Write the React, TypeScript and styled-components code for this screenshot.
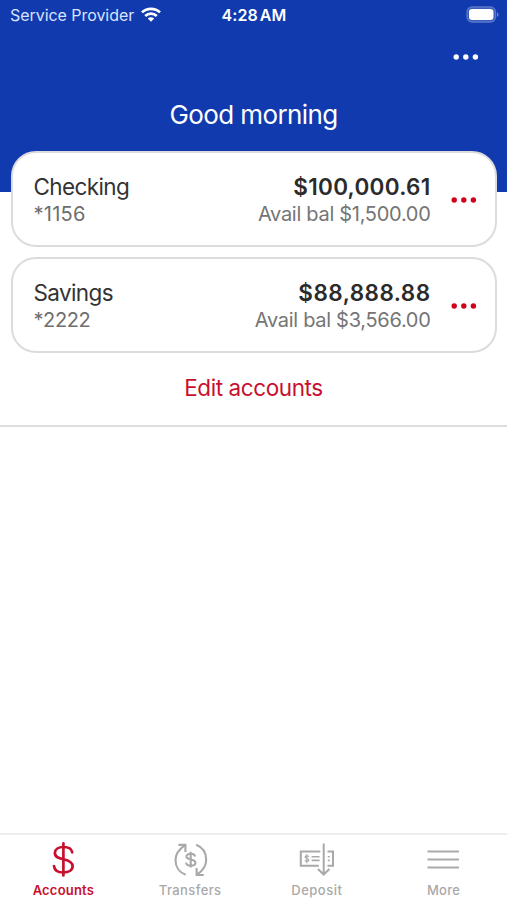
import React from "react";
import styled, { createGlobalStyle } from "styled-components";

const BLUE = "#103aad";
const RED = "#c8102e";
const GREY = "#a9a9a9";

const GlobalStyle = createGlobalStyle`
  * { box-sizing: border-box; }
  body { margin: 0; background: #fff; }
  button { border: 0; padding: 0; background: none; font: inherit; color: inherit; }
  svg { display: block; }
`;

const Screen = styled.div`
  display: flex;
  flex-direction: column;
  width: 507px;
  height: 900px;
  background: #fff;
  overflow: hidden;
  font-family: Inter, "Liberation Sans", sans-serif;
`;

const Header = styled.header`
  flex: none;
  height: 192px;
  background: ${BLUE};
  color: #fff;
`;

const StatusBar = styled.div`
  display: grid;
  grid-template-columns: 1fr auto 1fr;
  align-items: center;
  height: 30px;
  padding: 0 9px 0 10px;
`;

const Carrier = styled.div`
  display: flex;
  align-items: center;
  gap: 7px;
  color: #d9e3ff;
`;

const Battery = styled.div`
  display: flex;
  justify-content: flex-end;
  margin-right: -1px;
  padding-bottom: 1px;
`;

const MenuRow = styled.div`
  display: flex;
  justify-content: flex-end;
  align-items: center;
  height: 54px;
  padding-right: 28px;
`;

const Label = styled.span<{
  $size: number;
  $weight?: number;
  $color?: string;
  $track?: number;
  $word?: number;
  $line?: number;
}>`
  display: block;
  font-size: ${(p) => p.$size}px;
  font-weight: ${(p) => p.$weight ?? 400};
  color: ${(p) => p.$color ?? "inherit"};
  letter-spacing: ${(p) => p.$track ?? 0}px;
  word-spacing: ${(p) => p.$word ?? 0}px;
  line-height: ${(p) => p.$line ?? 27}px;
  white-space: nowrap;
`;

const Greeting = styled.h1`
  margin: 0;
  padding-top: 14px;
  font-size: 26px;
  font-weight: 400;
  line-height: 34px;
  letter-spacing: -0.6px;
  text-align: center;
`;

const AccountList = styled.main`
  flex: none;
  display: flex;
  flex-direction: column;
  gap: 10px;
  height: 276px;
  margin-top: -41px;
  padding: 0 10.5px;
  border-bottom: 2px solid #dedede;
`;

const AccountCard = styled.section`
  flex: none;
  display: grid;
  grid-template-columns: 1fr auto 26px;
  column-gap: 20px;
  align-items: center;
  height: 96px;
  padding: 0 18px 0 21px;
  background: #fff;
  border: 2px solid #dcdcdc;
  border-radius: 25px;
`;

const Lines = styled.div<{ $end?: boolean }>`
  display: flex;
  flex-direction: column;
  align-items: ${(p) => (p.$end ? "flex-end" : "flex-start")};
  padding-top: 4px;
`;

const CardMenu = styled.button`
  padding-top: 2px;
`;

const EditButton = styled.button`
  align-self: center;
  height: 49px;
`;

const TabBar = styled.nav`
  flex: none;
  display: grid;
  grid-template-columns: repeat(4, 1fr);
  height: 67px;
  margin-top: auto;
  border-top: 2px solid #ededed;
`;

const Tab = styled.button<{ $active?: boolean }>`
  display: flex;
  flex-direction: column;
  align-items: center;
  gap: 2px;
  padding-top: 7px;
  color: ${(p) => (p.$active ? RED : GREY)};
`;

const Dots = ({ color }: { color: string }) => (
  <svg width="26" height="6" viewBox="0 0 26 6" fill={color}>
    <circle cx="3.2" cy="3" r="2.7" />
    <circle cx="12.8" cy="3" r="2.7" />
    <circle cx="22.4" cy="3" r="2.7" />
  </svg>
);

const WifiIcon = () => (
  <svg width="20" height="16" viewBox="0 0 20 16" fill="none" stroke="#fff" strokeWidth="2.7">
    <path d="M1 5.4a13 13 0 0 1 18 0" />
    <path d="M4.2 8.9a8.4 8.4 0 0 1 11.6 0" />
    <path d="M10 14.7 6.8 11.5a4.6 4.6 0 0 1 6.4 0z" fill="#fff" stroke="none" />
  </svg>
);

const BatteryIcon = () => (
  <svg width="33" height="17" viewBox="0 0 33 17">
    <rect x="1" y="1" width="28.5" height="15" rx="5" fill="#3a5cbd" stroke="#5a77c9" strokeWidth="1.3" />
    <rect x="3" y="3" width="24.5" height="11" rx="3.2" fill="#fff" />
    <path d="M31 6v5q1.5-1 1.5-2.5T31 6z" fill="#7189cf" />
  </svg>
);

const DollarIcon = () => (
  <svg width="36" height="36" viewBox="0 0 36 36" fill="none" stroke="currentColor" strokeWidth="2.7" strokeLinecap="round">
    <path d="M18.4 1.4v32" />
    <path d="M27.2 10.3C26.6 6.8 23.2 5 18.4 5s-8.5 2.3-8.5 6c0 4.2 4 5.3 8.5 6.3s9.2 2.5 9.2 7c0 4-4 6.2-9.2 6.2S9.5 28.2 9 24.1" />
  </svg>
);

const TransfersIcon = () => (
  <svg width="36" height="36" viewBox="0 0 36 36" fill="none" stroke="currentColor" strokeWidth="2.1">
    <path d="M13.7 32.7C7.5 30.5 3.5 25 3.5 18.2c0-6 3-10.6 9-14.6" />
    <path d="M6.4 2.9h7v7" />
    <path d="M24.2 2.7c6.3 2.5 10 8 10 15 0 6-2.8 10.5-9 14.7" />
    <path d="M24.6 26v7h7.2" />
    <path d="M18.7 9.8v15.8M23.1 14.4c-.4-1.7-2-2.6-4.4-2.6-2.6 0-4.3 1-4.3 2.8 0 4.1 9 1.8 9 6.1 0 1.9-1.9 3-4.6 3-2.8 0-4.5-1.2-4.8-3.1" />
  </svg>
);

const DepositIcon = () => (
  <svg width="36" height="36" viewBox="0 0 36 36" fill="none" stroke="currentColor" strokeWidth="2">
    <path d="M21.3 9.5H1.8v14.2h18M28.5 9.5H34v14.2h-5.5" />
    <path d="M24.7 1.5v31M19 27l5.7 5.5 5.7-5.5" />
    <path d="M12.6 14.7h8M12.6 18.4h8M28.8 14.7h2M28.8 18.4h2" strokeWidth="1.6" />
    <path d="M7.8 12.3v9M9.8 14.7c-.7-1.4-3.7-1-3.7.3 0 1.8 3.8 1.1 3.8 3 0 1.7-3.5 1.8-4.1.3" strokeWidth="1.2" />
  </svg>
);

const MoreIcon = () => (
  <svg width="36" height="36" viewBox="0 0 36 36" stroke="currentColor" strokeWidth="2">
    <path d="M1.5 9.5H33M1.5 17.5H33M1.5 25.5H33" />
  </svg>
);

const accounts = [
  { name: "Checking", mask: "*1156", maskTrack: 0.25, balance: "$100,000.61", balanceTrack: 0.28, available: "Avail bal $1,500.00" },
  { name: "Savings", mask: "*2222", maskTrack: -0.4, balance: "$88,888.88", balanceTrack: 0.45, available: "Avail bal $3,566.00" },
];

const tabs = [
  { label: "Accounts", Icon: DollarIcon, track: 0.2, active: true },
  { label: "Transfers", Icon: TransfersIcon, track: 0.4 },
  { label: "Deposit", Icon: DepositIcon, track: 0.5 },
  { label: "More", Icon: MoreIcon, track: 0.3 },
];

export default function App() {
  return (
    <Screen>
      <GlobalStyle />
      <Header>
        <StatusBar>
          <Carrier>
            <Label $size={16} $track={-0.05}>Service Provider</Label>
            <WifiIcon />
          </Carrier>
          <Label $size={16} $weight={600} $track={0.1} $word={-2.2}>4:28 AM</Label>
          <Battery>
            <BatteryIcon />
          </Battery>
        </StatusBar>
        <MenuRow>
          <button aria-label="Options"><Dots color="#fff" /></button>
        </MenuRow>
        <Greeting>Good morning</Greeting>
      </Header>
      <AccountList>
        {accounts.map((a) => (
          <AccountCard key={a.name}>
            <Lines>
              <Label $size={22.5} $track={-0.62} $color="#333">{a.name}</Label>
              <Label $size={20} $track={a.maskTrack} $line={29} $color="#6e6e6e">{a.mask}</Label>
            </Lines>
            <Lines $end>
              <Label $size={22.5} $weight={600} $track={a.balanceTrack} $color="#2b2b2b">{a.balance}</Label>
              <Label $size={20} $track={-0.29} $line={29} $color="#757575">{a.available}</Label>
            </Lines>
            <CardMenu aria-label={`${a.name} options`}><Dots color="#d0021b" /></CardMenu>
          </AccountCard>
        ))}
        <EditButton>
          <Label $size={22.5} $track={-0.4} $color={RED}>Edit accounts</Label>
        </EditButton>
      </AccountList>
      <TabBar>
        {tabs.map(({ label, Icon, track, active }) => (
          <Tab key={label} $active={active}>
            <Icon />
            <Label $size={13} $weight={active ? 600 : 500} $track={track} $line={20}>{label}</Label>
          </Tab>
        ))}
      </TabBar>
    </Screen>
  );
}
